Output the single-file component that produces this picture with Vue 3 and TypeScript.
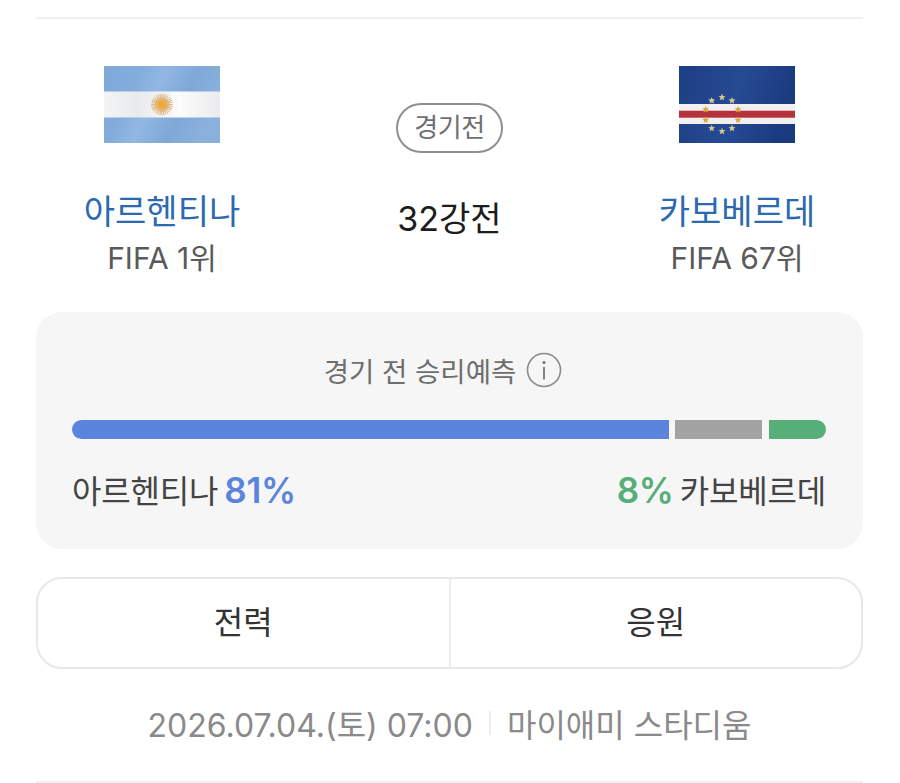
<script setup lang="ts">
function starPath(cx: number, cy: number, r: number): string {
  const pts: string[] = []
  for (let i = 0; i < 10; i++) {
    const rad = i % 2 === 0 ? r : r * 0.45
    const a = -Math.PI / 2 + (i * Math.PI) / 5
    pts.push(`${(cx + rad * Math.cos(a)).toFixed(2)},${(cy + rad * Math.sin(a)).toFixed(2)}`)
  }
  return `M${pts.join('L')}Z`
}

const cvStars = [
  [32.7, 34.7], [43, 31.3], [53, 34.7],
  [26.7, 43.6], [59, 43.6],
  [26.7, 54], [59, 54],
  [32.7, 62.3], [43, 65.3], [53, 62.3],
].map((s) => starPath(s[0], s[1], 3.7))

const sunRays = Array.from({ length: 32 }, (_, i) => (i * 360) / 32)
</script>

<template>
  <div class="page">
    <div class="match">
      <div class="team">
        <svg class="flag" viewBox="0 0 116 77" width="116" height="77">
          <defs>
            <linearGradient id="skyFold" x1="0" y1="0" x2="1" y2="0.3">
              <stop offset="0" stop-color="#7fa9d9" />
              <stop offset="0.3" stop-color="#82acdb" />
              <stop offset="0.5" stop-color="#92b8e2" />
              <stop offset="0.75" stop-color="#7ea8d8" />
              <stop offset="1" stop-color="#8ab0dc" />
            </linearGradient>
            <linearGradient id="whiteFold" x1="0" y1="0" x2="1" y2="0">
              <stop offset="0" stop-color="#f3f4f5" />
              <stop offset="0.3" stop-color="#e9eaec" />
              <stop offset="0.65" stop-color="#fcfcfc" />
              <stop offset="1" stop-color="#eaebed" />
            </linearGradient>
          </defs>
          <rect width="116" height="77" fill="url(#skyFold)" />
          <rect y="25.5" width="116" height="26" fill="url(#whiteFold)" />
          <g stroke="#d9b078" stroke-width="0.9">
            <line
              v-for="a in sunRays"
              :key="a"
              x1="58"
              y1="27.5"
              x2="58"
              y2="34"
              :transform="`rotate(${a} 58 38.5)`"
            />
          </g>
          <circle cx="58" cy="38.5" r="7" fill="#e3b677" />
          <circle cx="58" cy="38.5" r="4" fill="#efa93a" />
        </svg>
        <div class="team-name">아르헨티나</div>
        <div class="rank">FIFA 1위</div>
      </div>

      <div class="center">
        <span class="status">경기전</span>
        <div class="round">32강전</div>
      </div>

      <div class="team">
        <svg class="flag" viewBox="0 0 116 77" width="116" height="77">
          <defs>
            <linearGradient id="navyFold" x1="0" y1="0" x2="1" y2="0.2">
              <stop offset="0" stop-color="#1c3e84" />
              <stop offset="0.55" stop-color="#264a93" />
              <stop offset="1" stop-color="#1b3b80" />
            </linearGradient>
          </defs>
          <rect width="116" height="77" fill="url(#navyFold)" />
          <rect y="38" width="116" height="20" fill="#f1eff0" />
          <rect y="44.7" width="116" height="7" fill="#b5323d" />
          <path
            v-for="(d, i) in cvStars"
            :key="i"
            :d="d"
            :fill="i > 2 && i < 7 ? '#dfa43c' : '#d2c88f'"
          />
        </svg>
        <div class="team-name">카보베르데</div>
        <div class="rank">FIFA 67위</div>
      </div>
    </div>

    <section class="predict">
      <div class="predict-title">
        <span>경기 전 승리예측</span>
        <svg class="info" viewBox="0 0 36 36" width="36" height="36">
          <circle cx="18" cy="18" r="16.5" fill="none" stroke="#8c8c8c" stroke-width="1.6" />
          <circle cx="18" cy="10.5" r="1.5" fill="#777" />
          <rect x="17.1" y="15" width="1.8" height="12.5" fill="#777" />
        </svg>
      </div>
      <div class="bar">
        <div class="seg seg-home"></div>
        <div class="seg seg-draw"></div>
        <div class="seg seg-away"></div>
      </div>
      <div class="odds">
        <div class="odd">아르헨티나<b class="pct-home">81%</b></div>
        <div class="odd"><b class="pct-away">8%</b>카보베르데</div>
      </div>
    </section>

    <div class="tabs">
      <div class="tab">전력</div>
      <div class="tab">응원</div>
    </div>

    <div class="meta">
      <span>2026.07.04.(토) 07:00</span>
      <i class="sep"></i>
      <span>마이애미 스타디움</span>
    </div>
    <div class="bottom-line"></div>
  </div>
</template>

<style>
body {
  background: #fff;
}
</style>

<style scoped>
.page {
  box-sizing: border-box;
  width: 900px;
  height: 783px;
  padding: 17px 37px 0 36px;
  font-family: Inter, "Noto Sans CJK KR", "Liberation Sans", sans-serif;
  overflow: hidden;
}

.match {
  display: grid;
  grid-template-columns: 252px 1fr 252px;
  height: 295px;
  border-top: 2px solid #f0f0f0;
  box-sizing: border-box;
}

.team {
  display: flex;
  flex-direction: column;
  align-items: center;
  padding-top: 47px;
}

.flag {
  display: block;
  filter: blur(0.5px);
}

.team-name {
  margin-top: 44px;
  font-size: 34px;
  line-height: 50px;
  color: #2b69b0;
}

.rank {
  margin-top: -1px;
  font-size: 30px;
  line-height: 44px;
  letter-spacing: 0;
  color: #5a5a5a;
}

.center {
  display: flex;
  flex-direction: column;
  align-items: center;
  padding-top: 84px;
}

.status {
  box-sizing: border-box;
  height: 50px;
  padding: 0 16px;
  border: 2px solid #8f8f8f;
  border-radius: 25px;
  font-size: 26px;
  line-height: 46px;
  letter-spacing: -0.5px;
  color: #6f6f6f;
}

.round {
  margin-top: 38px;
  font-size: 34px;
  line-height: 56px;
  color: #1c1c1c;
}

.predict {
  box-sizing: border-box;
  height: 237px;
  padding: 33px 37px 0 36px;
  background: #f6f6f6;
  border-radius: 26px;
}

.predict-title {
  display: flex;
  align-items: center;
  justify-content: center;
  gap: 10px;
  height: 50px;
  padding-right: 12px;
  font-size: 27.5px;
  color: #6e6e6e;
}

.info {
  display: block;
}

.bar {
  display: flex;
  gap: 6px;
  height: 19px;
  margin-top: 25px;
}

.seg-home {
  width: 597px;
  background: #5b84dc;
  border-radius: 10px 0 0 10px;
}

.seg-draw {
  width: 87px;
  margin-right: 1px;
  background: #a3a3a3;
}

.seg-away {
  flex: 1;
  background: #56ae79;
  border-radius: 0 10px 10px 0;
}

.odds {
  display: flex;
  justify-content: space-between;
  margin-top: 25px;
  font-size: 32px;
  line-height: 52px;
  letter-spacing: -0.2px;
  color: #444;
}

.odd {
  display: flex;
  align-items: baseline;
  gap: 6px;
}

.odd b {
  font-size: 35px;
  font-weight: 600;
}

.pct-home {
  color: #5b84dc;
}

.pct-away {
  color: #56ae79;
}

.tabs {
  display: flex;
  box-sizing: border-box;
  height: 92px;
  margin-top: 28px;
  border: 2px solid #e8e8e8;
  border-radius: 26px;
}

.tab {
  flex: 1;
  text-align: center;
  font-size: 32px;
  line-height: 87px;
  color: #333;
}

.tab + .tab {
  border-left: 2px solid #eeeeee;
}

.meta {
  display: flex;
  align-items: center;
  justify-content: center;
  gap: 16px;
  margin-top: 28px;
  height: 52px;
  font-size: 32px;
  color: #8a8a8a;
}

.sep {
  width: 2px;
  height: 24px;
  background: #eeeeee;
}

.bottom-line {
  height: 2px;
  margin-top: 32px;
  background: #f0f0f0;
}
</style>
